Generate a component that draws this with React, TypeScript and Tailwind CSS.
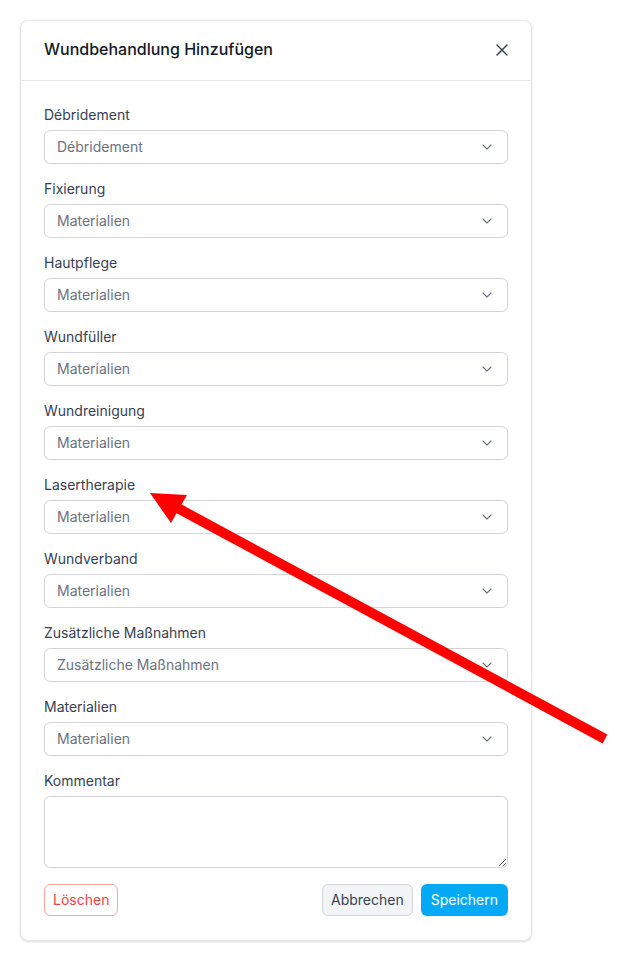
import { ChevronDown, X } from 'lucide-react';

const FIELDS = [
  { label: 'Débridement', placeholder: 'Débridement' },
  { label: 'Fixierung', placeholder: 'Materialien' },
  { label: 'Hautpflege', placeholder: 'Materialien' },
  { label: 'Wundfüller', placeholder: 'Materialien' },
  { label: 'Wundreinigung', placeholder: 'Materialien' },
  { label: 'Lasertherapie', placeholder: 'Materialien' },
  { label: 'Wundverband', placeholder: 'Materialien' },
  { label: 'Zusätzliche Maßnahmen', placeholder: 'Zusätzliche Maßnahmen' },
  { label: 'Materialien', placeholder: 'Materialien' },
];

const SelectField = ({ label, placeholder }: { label: string; placeholder: string }) => (
  <div>
    <label className="block text-sm leading-5 text-[#374151] mb-[5px]">{label}</label>
    <button
      type="button"
      className="w-full h-[34px] flex items-center justify-between px-3 border border-[#d1d5db] rounded-md bg-white text-sm text-[#6b7280] text-left"
    >
      <span>{placeholder}</span>
      <ChevronDown size={16} strokeWidth={1.6} className="text-[#6b7280]" />
    </button>
  </div>
);

const App = () => {
  return (
    <div className="relative min-h-[961px] w-full bg-white font-['Inter','Noto_Sans',sans-serif]">
      <div className="pt-5 pl-5">
        <div className="w-[512px] bg-white rounded-lg border border-[#e5e7eb] shadow-sm">
          {/* Header */}
          <div className="flex items-start justify-between px-[23px] pt-4 h-[60px] border-b border-[#e5e7eb]">
            <h2 className="text-base font-medium text-[#111827] leading-6">Wundbehandlung Hinzufügen</h2>
            <button type="button" className="-mr-1 mt-[3px] text-[#374151]">
              <X size={20} strokeWidth={1.6} />
            </button>
          </div>

          {/* Body */}
          <div className="px-[23px] pt-6 pb-6">
            <div className="flex flex-col gap-[15px]">
              {FIELDS.map((f) => (
                <SelectField key={f.label} label={f.label} placeholder={f.placeholder} />
              ))}
              <div>
                <label className="block text-sm leading-5 text-[#374151] mb-[5px]">Kommentar</label>
                <textarea className="block w-full h-[72px] border border-[#d1d5db] rounded-md bg-white px-3 py-2 text-sm outline-none" />
              </div>
            </div>

            {/* Footer */}
            <div className="flex items-center justify-between mt-4">
              <button
                type="button"
                className="h-8 px-2 rounded-md border border-[#fca5a5] bg-white text-sm text-[#ef4444]"
              >
                Löschen
              </button>
              <div className="flex gap-2">
                <button
                  type="button"
                  className="h-8 px-2 rounded-md border border-[#d1d5db] bg-[#f3f4f6] text-sm text-[#374151]"
                >
                  Abbrechen
                </button>
                <button
                  type="button"
                  className="h-8 px-[10px] rounded-md bg-[#03a9f4] text-sm text-white"
                >
                  Speichern
                </button>
              </div>
            </div>
          </div>
        </div>
      </div>

      {/* Annotation arrow */}
      <svg className="absolute left-0 top-0 pointer-events-none" width="625" height="961" viewBox="0 0 625 961">
        <line x1="605" y1="739" x2="172" y2="505" stroke="#fe0000" strokeWidth="10" />
        <polygon points="150,493 187,495 171,523" fill="#fe0000" />
      </svg>
    </div>
  );
};

export default App;
